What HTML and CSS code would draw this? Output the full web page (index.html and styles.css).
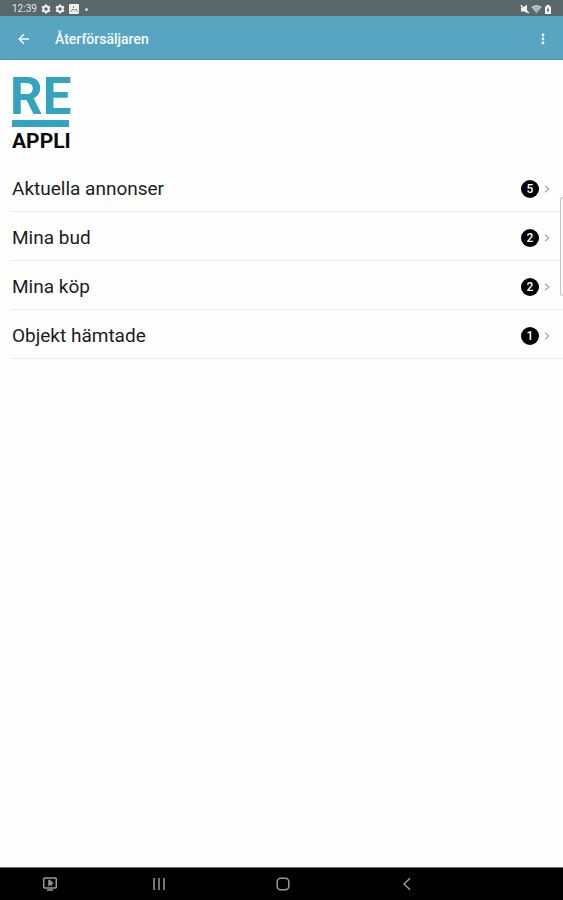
FILE: index.html
```html
<!DOCTYPE html>
<html lang="sv">
<head>
<meta charset="utf-8">
<meta name="viewport" content="width=device-width, initial-scale=1">
<title>Återförsäljaren</title>
<link rel="stylesheet" href="styles.css">
</head>
<body>
<div class="status">
  <span class="clock">12:39</span>
  <svg class="gear" viewBox="0 0 10 10"><circle cx="5" cy="5" r="2.7"/><path d="M5 .4v2M5 7.6v2M1 2.7l1.8 1M7.2 6.3l1.8 1M1 7.3l1.8-1M7.2 3.7l1.8-1"/></svg>
  <svg class="gear" viewBox="0 0 10 10"><circle cx="5" cy="5" r="2.7"/><path d="M5 .4v2M5 7.6v2M1 2.7l1.8 1M7.2 6.3l1.8 1M1 7.3l1.8-1M7.2 3.7l1.8-1"/></svg>
  <svg class="picture" viewBox="0 0 10 10"><rect width="10" height="10" rx="1"/><path d="M1.5 8 4 5l1.5 1.5L7 5l1.5 3M4.5 2v2"/></svg>
  <span class="dot"></span>
  <svg class="system" viewBox="0 0 32 10">
    <path d="M1 3.500h2L7 .8v8.400L4.500 7.500H1z" fill="#f0f2f2"/><path d="M.8 1.200 8.800 9" stroke="#f0f2f2" stroke-width="1.400"/>
    <path d="M11 3q5.500-4 11 0l-5.500 6.500z" fill="#a2abad"/><path d="M12 3.300q4.500-3 9 0M14 5.500q2.500-2 5 0" fill="none" stroke="#d8dddd" stroke-width=".8"/>
    <path d="M25 2.500h1.500V1h3v1.500H31V10h-6z" fill="#f5f6f6"/><path d="M28 4.500v3" stroke="#59666a" stroke-width="1.800"/>
  </svg>
</div>
<header class="bar">
  <button class="icon-button" aria-label="Tillbaka"><svg width="12" height="12" viewBox="0 0 12 12"><path d="M11 6H1.500M6 1.200 1.200 6 6 10.800"/></svg></button>
  <h1 class="title">Återförsäljaren</h1>
  <button class="icon-button" aria-label="Meny"><svg class="more" width="4" height="12" viewBox="0 0 4 12"><circle cx="2" cy="2" r="1.400"/><circle cx="2" cy="6" r="1.400"/><circle cx="2" cy="10" r="1.400"/></svg></button>
</header>
<main class="content">
  <div class="logo"><span class="logo-top">RE</span><span class="logo-bottom">APPLI</span></div>
  <ul class="list">
    <li><a class="row" href="#annonser"><span class="label">Aktuella annonser</span><span class="badge">5</span><svg class="chevron" viewBox="0 0 6 8"><path d="M1 .8 4.800 4 1 7.200"/></svg></a></li>
    <li><a class="row" href="#bud"><span class="label">Mina bud</span><span class="badge">2</span><svg class="chevron" viewBox="0 0 6 8"><path d="M1 .8 4.800 4 1 7.200"/></svg></a></li>
    <li><a class="row" href="#kop"><span class="label">Mina köp</span><span class="badge">2</span><svg class="chevron" viewBox="0 0 6 8"><path d="M1 .8 4.800 4 1 7.200"/></svg></a></li>
    <li><a class="row" href="#hamtade"><span class="label">Objekt hämtade</span><span class="badge">1</span><svg class="chevron" viewBox="0 0 6 8"><path d="M1 .8 4.800 4 1 7.200"/></svg></a></li>
  </ul>
</main>
<div class="edge-handle"></div>
<nav class="system-nav">
  <button class="nav-button" aria-label="Skärmbild"><svg width="16" height="14" viewBox="0 0 16 14"><rect x="1.700" y="1" width="12.600" height="10" rx="1"/><path d="M5 13h6M7 3v5l1.200-1.200L10 8.500M7 3l3 3H8"/></svg></button>
  <button class="nav-button" aria-label="Senaste"><svg width="14" height="14" viewBox="0 0 14 14"><path d="M2 1v12M7 1v12M12 1v12"/></svg></button>
  <button class="nav-button" aria-label="Hem"><svg width="14" height="14" viewBox="0 0 14 14"><rect x="1.200" y="1.200" width="11.600" height="11.600" rx="3.500"/></svg></button>
  <button class="nav-button" aria-label="Bakåt"><svg width="14" height="14" viewBox="0 0 14 14"><path d="M10 1.200 4 7l6 5.800"/></svg></button>
</nav>
</body>
</html>
```
FILE: styles.css
```css
* {
  box-sizing: border-box;
}

body {
  margin: 0;
  min-height: 100vh;
  display: flex;
  flex-direction: column;
  background: #fefefe;
  color: #1c1c1c;
  font-family: Roboto, sans-serif;
}

button {
  padding: 0;
  border: 0;
  background: none;
}

svg {
  display: block;
  flex: none;
}

.status {
  display: flex;
  align-items: center;
  gap: 4px;
  height: 16px;
  padding: 2px 11px 0 12px;
  background: #59666a;
  color: #e3e6e7;
  font-size: 10px;
  line-height: 14px;
}

.gear {
  width: 10px;
  height: 10px;
  fill: none;
  stroke: #f0f2f2;
  stroke-width: 2;
}

.picture {
  width: 10px;
  height: 10px;
  fill: #eef0f0;
}

.picture path {
  fill: none;
  stroke: #7c8689;
}

.dot {
  width: 3px;
  height: 3px;
  margin-left: 2px;
  border-radius: 50%;
  background: #d5dadb;
}

.system {
  width: 32px;
  height: 10px;
  margin-left: auto;
}

.bar {
  display: flex;
  align-items: center;
  height: 44px;
  padding: 2px 8px 0 12px;
  background: #57a5c0;
  border-bottom: 1px solid #4795b0;
  color: #f4fbfd;
}

.icon-button {
  display: flex;
  align-items: center;
  justify-content: center;
  width: 24px;
  height: 32px;
}

.icon-button svg {
  fill: none;
  stroke: #f4fbfd;
  stroke-width: 1.500;
}

.icon-button .more {
  fill: #f4fbfd;
  stroke: none;
}

.title {
  flex: 1;
  margin: 0 0 0 19px;
  font-size: 14px;
  font-weight: 500;
  line-height: 20px;
}

.content {
  flex: 1;
  padding: 17px 0 0 12px;
}

.logo {
  display: inline-flex;
  flex-direction: column;
  margin-bottom: 12px;
  font-weight: 700;
}

.logo-top {
  margin-left: -2px;
  padding-top: 1px;
  color: #34a3bd;
  font-size: 51px;
  line-height: 38px;
}

.logo-bottom {
  width: 57px;
  margin-top: 4px;
  padding-top: 4px;
  border-top: 7px solid #34a3bd;
  color: #0b0b0b;
  font-size: 21px;
  line-height: 20px;
}

.list {
  margin: 0;
  padding: 0;
  list-style: none;
}

.row {
  display: flex;
  align-items: center;
  min-height: 49px;
  padding: 4px 13px 0 0;
  border-bottom: 1px solid #e9e9e9;
  color: inherit;
  text-decoration: none;
}

.label {
  flex: 1;
  font-size: 19px;
  line-height: 24px;
}

.badge {
  width: 18px;
  height: 18px;
  margin-right: 5px;
  border-radius: 50%;
  background: #000;
  color: #fff;
  font-size: 12px;
  font-weight: 500;
  line-height: 18px;
  text-align: center;
}

.chevron {
  width: 6px;
  height: 8px;
  fill: none;
  stroke: #a6a6a6;
  stroke-width: 1.200;
}

.edge-handle {
  position: absolute;
  top: 197px;
  right: 0;
  width: 3px;
  height: 99px;
  border: 1px solid #c4c4c4;
  border-right: 0;
  border-radius: 3px 0 0 3px;
  background: #fbfbfb;
}

.system-nav {
  display: grid;
  grid-template-columns: 100fr 118fr 128fr 120fr;
  justify-items: center;
  align-items: center;
  height: 33px;
  padding-right: 17%;
  border-top: 1px solid #777;
  background: #000;
}

.nav-button svg {
  fill: none;
  stroke: #9b9b9b;
  stroke-width: 1.500;
}
```
